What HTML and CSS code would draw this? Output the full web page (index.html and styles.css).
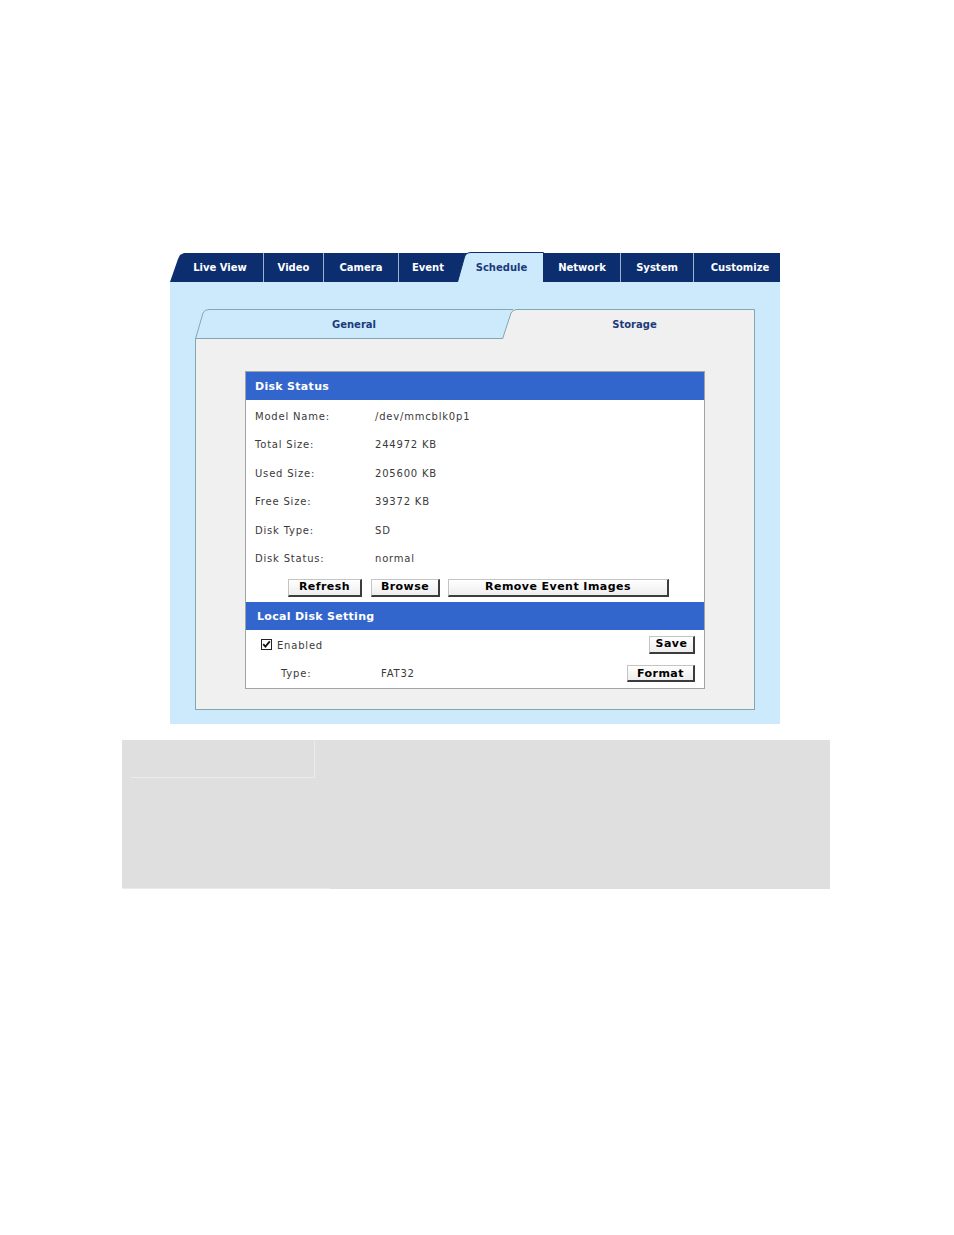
FILE: index.html
```html
<!DOCTYPE html>
<html>
<head>
<meta charset="utf-8">
<title>Storage</title>
<link rel="stylesheet" href="styles.css">
</head>
<body>
<div class="page">
  <div class="app">
    <nav class="tabs">
      <div class="tab first">Live View</div>
      <div class="tab w-video">Video</div>
      <div class="tab w-camera">Camera</div>
      <div class="tab w-event">Event</div>
      <div class="tab active">
        <svg class="shape" width="87" height="30" viewBox="0 0 87 30">
          <path d="M0.5,30 L7.5,5 Q9,0.5 14,0.5 L86.5,0.5 L86.5,30 Z" fill="#cdeafc"/>
          <path d="M0.5,30 L7.5,5 Q9,0.5 14,0.5 L86.5,0.5 L86.5,30" fill="none" stroke="#0c2d6e" stroke-width="1"/>
        </svg>
        <span class="label">Schedule</span>
      </div>
      <div class="tab w-network">Network</div>
      <div class="tab w-system">System</div>
      <div class="tab w-custom">Customize</div>
    </nav>
    <div class="panel">
      <div class="subtabs">
        <div class="subtab general">
          <svg class="shape" width="318" height="30" viewBox="0 0 318 30">
            <path d="M0.5,30 L8,4 Q9.5,0.5 14,0.5 L318,0.5 L318,30 Z" fill="#cdeafc"/>
            <path d="M0.5,30 L8,4 Q9.5,0.5 14,0.5 L318,0.5 M0,29.5 L318,29.5" fill="none" stroke="#7fa9ad" stroke-width="1"/>
          </svg>
          <span class="label">General</span>
        </div>
        <div class="subtab storage">
          <svg class="shape" width="253" height="30" viewBox="0 0 253 30">
            <path d="M0.5,30 L9,4 Q10.5,0.5 15,0.5 L252.5,0.5 L252.5,30 Z" fill="#f0f0f0"/>
            <path d="M0.5,30 L9,4 Q10.5,0.5 15,0.5 L252.5,0.5 L252.5,30" fill="none" stroke="#7fa9ad" stroke-width="1"/>
          </svg>
          <span class="label">Storage</span>
        </div>
      </div>
      <div class="subbody">
        <div class="box">
          <div class="hdr">Disk Status</div>
          <div class="rows">
            <div class="row"><span class="lbl">Model Name:</span><span>/dev/mmcblk0p1</span></div>
            <div class="row"><span class="lbl">Total Size:</span><span>244972 KB</span></div>
            <div class="row"><span class="lbl">Used Size:</span><span>205600 KB</span></div>
            <div class="row"><span class="lbl">Free Size:</span><span>39372 KB</span></div>
            <div class="row"><span class="lbl">Disk Type:</span><span>SD</span></div>
            <div class="row"><span class="lbl">Disk Status:</span><span>normal</span></div>
          </div>
          <div class="btnrow">
            <button class="btn b-refresh">Refresh</button>
            <button class="btn b-browse">Browse</button>
            <button class="btn b-remove">Remove Event Images</button>
          </div>
          <div class="hdr hdr2">Local Disk Setting</div>
          <div class="lrow">
            <label class="check">
              <span class="cbox"><svg width="9" height="9" viewBox="0 0 9 9"><path d="M1.2,4.2 L3.4,6.6 L7.8,1.4" fill="none" stroke="#111" stroke-width="1.8"/></svg></span>
              <span>Enabled</span>
            </label>
            <button class="btn b-save">Save</button>
          </div>
          <div class="lrow typerow">
            <div class="typeinfo"><span class="tlbl">Type:</span><span>FAT32</span></div>
            <button class="btn b-format">Format</button>
          </div>
        </div>
      </div>
    </div>
  </div>
  <div class="graybox">
    <div class="gcell"></div>
    <div class="gfoot"></div>
  </div>
</div>
</body>
</html>
```

FILE: styles.css
```css
html, body {
  margin: 0;
  padding: 0;
  background: #ffffff;
}

body {
  font-family: "DejaVu Sans", Verdana, sans-serif;
  font-size: 10px;
  color: #3a3a3a;
}

.page {
  width: 954px;
  padding-top: 252px;
}

.app {
  margin-left: 170px;
  width: 610px;
}

/* main tabs */
.tabs {
  display: flex;
  height: 30px;
}

.tab {
  height: 29px;
  margin-top: 1px;
  box-sizing: border-box;
  background: #0c2d6e;
  color: #ffffff;
  font-weight: bold;
  font-size: 10px;
  display: flex;
  align-items: center;
  justify-content: center;
  border-right: 1px solid #9fb2cf;
}

.tab.first {
  width: 94px;
  padding-left: 7px;
  clip-path: polygon(0 100%, 8px 6px, 10px 2px, 14px 0, 100% 0, 100% 100%);
}

.w-video { width: 60px; }
.w-camera { width: 75px; }
.w-event { width: 68px; padding-right: 10px; border-right: none; }
.w-network { width: 77px; }
.w-system { width: 73px; }
.w-custom { width: 86px; padding-left: 6px; border-right: none; }

.tab.active {
  position: relative;
  width: 87px;
  height: 30px;
  margin-top: 0;
  margin-left: -10px;
  background: transparent;
  border-right: none;
  color: #1b3a7c;
  z-index: 1;
  padding-left: 2px;
}

.shape {
  position: absolute;
  left: 0;
  top: 0;
  display: block;
}

.label {
  position: relative;
}

/* panel */
.panel {
  background: #cdeafc;
  padding: 27px 25px 14px 25px;
}

.subtabs {
  display: flex;
  height: 30px;
}

.subtab {
  position: relative;
  height: 30px;
  display: flex;
  align-items: center;
  justify-content: center;
  font-weight: bold;
  font-size: 10px;
  color: #1b3a7c;
}

.subtab.general {
  width: 318px;
  padding-top: 1px;
  box-sizing: border-box;
}

.subtab.storage {
  width: 253px;
  margin-left: -11px;
  padding-left: 12px;
  padding-top: 1px;
  box-sizing: border-box;
}

.subbody {
  background: #f0f0f0;
  border: 1px solid #7fa9ad;
  border-top: none;
  padding: 32px 49px 20px 49px;
}

/* white box */
.box {
  background: #ffffff;
  border: 1px solid #a3a3a3;
}

.hdr {
  height: 28px;
  background: #3366cc;
  color: #ffffff;
  font-weight: bold;
  font-size: 11px;
  letter-spacing: 0.3px;
  display: flex;
  align-items: center;
  padding-left: 9px;
}

.hdr2 {
  padding-left: 11px;
}

.rows {
  padding-top: 2px;
}

.row {
  height: 28.5px;
  display: flex;
  align-items: center;
  padding-left: 9px;
  letter-spacing: 0.8px;
}

.lbl {
  width: 120px;
}

.btnrow {
  height: 29px;
  display: flex;
  align-items: center;
  padding-left: 42px;
  gap: 8px;
}

.btn {
  font-family: "DejaVu Sans", Verdana, sans-serif;
  font-weight: bold;
  font-size: 11px;
  letter-spacing: 0.45px;
  color: #000000;
  background: linear-gradient(#ffffff, #eeeeee);
  border-style: solid;
  border-width: 1px 2px 2px 1px;
  border-color: #c4c4c4 #3c3c3c #3c3c3c #c4c4c4;
  height: 18px;
  padding: 0;
  margin: 0;
  box-sizing: border-box;
  line-height: 14px;
}

.b-refresh { width: 74px; }
.b-browse { width: 69px; margin-left: 1px; }
.b-remove { width: 221px; }
.b-save { width: 46px; }
.b-format { width: 68px; height: 17px; line-height: 13px; }

.lrow {
  height: 29px;
  display: flex;
  align-items: center;
  justify-content: space-between;
  padding: 0 9px 0 15px;
  letter-spacing: 0.8px;
}

.check {
  display: flex;
  align-items: center;
  gap: 5px;
  padding-top: 2px;
}

.cbox {
  width: 11px;
  height: 11px;
  box-sizing: border-box;
  border: 1px solid #222222;
  background: #ffffff;
  display: flex;
  align-items: center;
  justify-content: center;
  margin-top: -3px;
}

.typerow {
  padding-left: 35px;
}

.typeinfo {
  display: flex;
}

.tlbl {
  width: 100px;
}

/* gray bottom box */
.graybox {
  margin: 16px 0 0 122px;
  width: 708px;
  height: 149px;
  background: #dfdfdf;
  display: flex;
  flex-direction: column;
  justify-content: space-between;
}

.gcell {
  margin-left: 9px;
  width: 183px;
  height: 37px;
  border-right: 1px solid #ebebeb;
  border-bottom: 1px solid #ebebeb;
}

.gfoot {
  width: 208px;
  height: 1px;
  background: #ebebeb;
}
```
